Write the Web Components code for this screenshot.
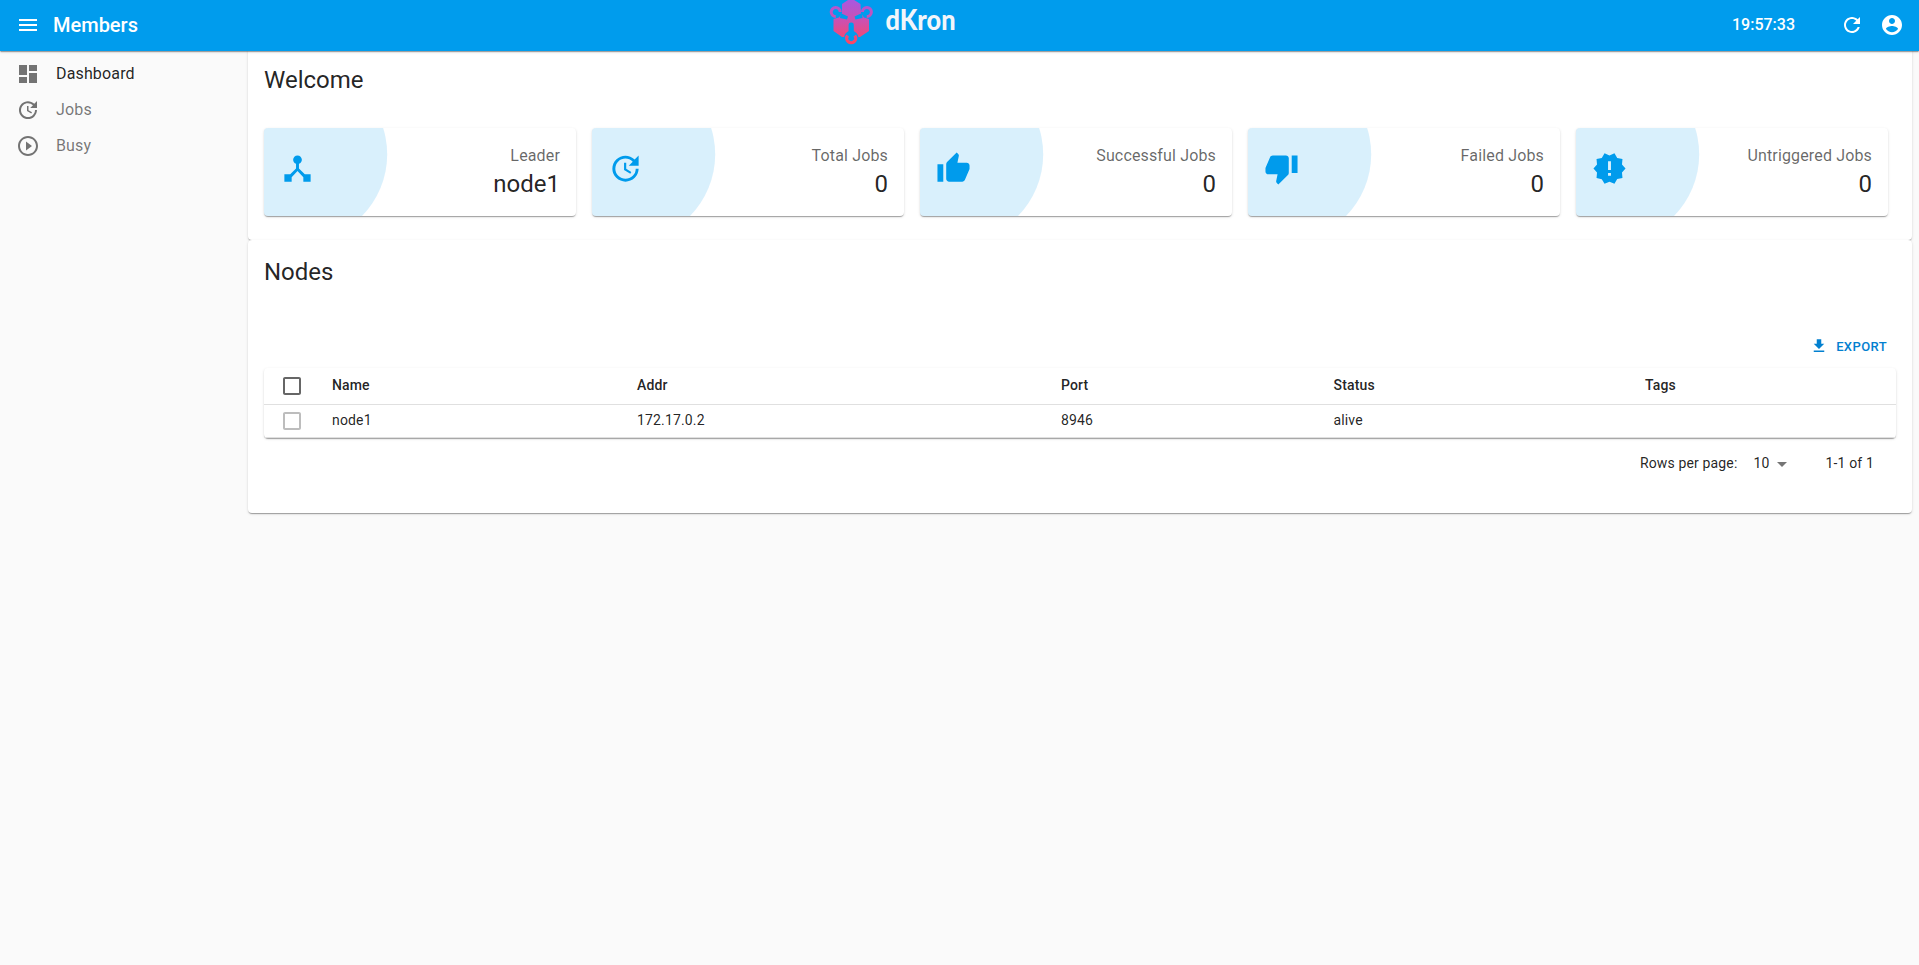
<!DOCTYPE html>
<html lang="en">
<head>
<meta charset="utf-8">
<title>Dkron</title>
<style>
    body {
        margin: 0;
        background: #fafafa;
        color: rgba(0, 0, 0, .87);
        font-family: Roboto, "Liberation Sans", sans-serif;
        --primary: #009ced;
        --shadow: 0 2px 1px -1px rgba(0, 0, 0, .2), 0 1px 1px 0 rgba(0, 0, 0, .14), 0 1px 3px 0 rgba(0, 0, 0, .12);
    }
</style>
</head>
<body>
<dk-layout>
    <dk-app-bar slot="bar" heading="Members" time="19:57:33"></dk-app-bar>
    <dk-menu-item slot="menu" icon="dashboard" active>Dashboard</dk-menu-item>
    <dk-menu-item slot="menu" icon="update">Jobs</dk-menu-item>
    <dk-menu-item slot="menu" icon="play">Busy</dk-menu-item>
    <dk-card heading="Welcome">
        <dk-stats>
            <dk-stat icon="hub" label="Leader">node1</dk-stat>
            <dk-stat icon="update" label="Total Jobs">0</dk-stat>
            <dk-stat icon="thumbUp" label="Successful Jobs">0</dk-stat>
            <dk-stat icon="thumbDown" label="Failed Jobs">0</dk-stat>
            <dk-stat icon="newReleases" label="Untriggered Jobs">0</dk-stat>
        </dk-stats>
    </dk-card>
    <dk-card heading="Nodes">
        <dk-export>Export</dk-export>
        <dk-datagrid></dk-datagrid>
        <dk-pagination per-page="10">1-1 of 1</dk-pagination>
    </dk-card>
</dk-layout>

<script>
const ICONS = {
    menu: 'M3 18h18v-2H3v2zm0-5h18v-2H3v2zm0-7v2h18V6H3z',
    dashboard: 'M3 13h8V3H3v10zm0 8h8v-6H3v6zm10 0h8V11h-8v10zm0-18v6h8V3h-8z',
    update: 'M21 10.12h-6.78l2.74-2.82c-2.73-2.7-7.15-2.8-9.88-.1-2.73 2.71-2.73 7.08 0 9.79s7.15 2.71 9.88 0C18.32 15.65 19 14.08 19 12.1h2c0 1.98-.88 4.55-2.64 6.29-3.51 3.48-9.21 3.48-12.72 0-3.5-3.47-3.53-9.11-.02-12.58s9.14-3.47 12.65 0L21 3v7.12zM12.5 8v4.25l3.5 2.08-.72 1.21L11 13V8h1.5z',
    play: 'M10 16.5l6-4.5-6-4.5v9zM12 2C6.48 2 2 6.48 2 12s4.48 10 10 10 10-4.48 10-10S17.52 2 12 2zm0 18c-4.41 0-8-3.59-8-8s3.59-8 8-8 8 3.59 8 8-3.59 8-8 8z',
    hub: 'M17 16l-4-4V8.82C14.16 8.4 15 7.3 15 6c0-1.66-1.34-3-3-3S9 4.34 9 6c0 1.3.84 2.4 2 2.82V12l-4 4H3v5h5v-3.05l4-4.2 4 4.2V21h5v-5h-4z',
    thumbUp: 'M1 21h4V9H1v12zm22-11c0-1.1-.9-2-2-2h-6.31l.95-4.57.03-.32c0-.41-.17-.79-.44-1.06L14.17 1 7.59 7.59C7.22 7.95 7 8.45 7 9v10c0 1.1.9 2 2 2h9c.83 0 1.54-.5 1.84-1.22l3.02-7.05c.09-.23.14-.47.14-.73v-2z',
    thumbDown: 'M15 3H6c-.83 0-1.54.5-1.84 1.22l-3.02 7.05c-.09.23-.14.47-.14.73v2c0 1.1.9 2 2 2h6.31l-.95 4.57-.03.32c0 .41.17.79.44 1.06L9.83 23l6.59-6.59c.36-.36.58-.86.58-1.41V5c0-1.1-.9-2-2-2zm4 0v12h4V3h-4z',
    newReleases: 'M23 12l-2.44-2.78.34-3.68-3.61-.82-1.89-3.18L12 3 8.6 1.54 6.71 4.72l-3.61.81.34 3.68L1 12l2.44 2.78-.34 3.69 3.61.82 1.89 3.18L12 21l3.4 1.46 1.89-3.18 3.61-.82-.34-3.68L23 12zm-10 5h-2v-2h2v2zm0-4h-2V7h2v6z',
    refresh: 'M17.65 6.35C16.2 4.9 14.21 4 12 4c-4.42 0-7.99 3.58-7.99 8s3.57 8 7.99 8c3.73 0 6.84-2.55 7.73-6h-2.08c-.82 2.33-3.04 4-5.65 4-3.31 0-6-2.69-6-6s2.69-6 6-6c1.66 0 3.14.69 4.22 1.78L13 11h7V4l-2.35 2.35z',
    account: 'M12 2C6.48 2 2 6.48 2 12s4.48 10 10 10 10-4.48 10-10S17.52 2 12 2zm0 3c1.66 0 3 1.34 3 3s-1.34 3-3 3-3-1.34-3-3 1.34-3 3-3zm0 14.2c-2.5 0-4.71-1.28-6-3.22.03-1.99 4-3.08 6-3.08 1.99 0 5.97 1.09 6 3.08-1.29 1.94-3.5 3.22-6 3.22z',
    download: 'M19 9h-4V3H9v6H5l7 7 7-7zM5 18v2h14v-2H5z',
    checkbox: 'M19 5v14H5V5h14m0-2H5c-1.1 0-2 .9-2 2v14c0 1.1.9 2 2 2h14c1.1 0 2-.9 2-2V5c0-1.1-.9-2-2-2z',
    dropDown: 'M7 10l5 5 5-5z'
};

class BaseElement extends HTMLElement {
    constructor() {
        super();
        this._shadowRoot = this.attachShadow({ mode: 'open' });
    }
    connectedCallback() {
        this._shadowRoot.innerHTML = this.template;
    }
}

class Icon extends BaseElement {
    get template() {
        return `
            <style>
                :host {
                    display: block;
                    flex: none;
                    width: var(--icon-size, 24px);
                    height: var(--icon-size, 24px);
                }
                svg {
                    display: block;
                    width: 100%;
                    height: 100%;
                    fill: currentColor;
                }
            </style>
            <svg viewBox="0 0 24 24"><path d="${ICONS[this.getAttribute('name')]}"/></svg>
        `;
    }
}

class Layout extends BaseElement {
    get template() {
        return `
            <style>
                :host {
                    display: flex;
                    flex-direction: column;
                    min-height: 100vh;
                }
                .bar {
                    height: 48px;
                    position: relative;
                    z-index: 1;
                }
                .body {
                    display: flex;
                    flex: 1;
                }
                nav {
                    width: 240px;
                    padding-top: 8px;
                    margin-right: 8px;
                }
                main {
                    flex: 1;
                    margin-right: 7px;
                }
            </style>
            <div class="bar"><slot name="bar"></slot></div>
            <div class="body">
                <nav><slot name="menu"></slot></nav>
                <main><slot></slot></main>
            </div>
        `;
    }
}

class Logo extends BaseElement {
    get template() {
        return `
            <style>
                :host {
                    display: block;
                }
                svg {
                    display: block;
                    overflow: visible;
                }
                text {
                    font: 900 28px Lato, sans-serif;
                    fill: #f1f5fa;
                }
                .cut {
                    fill: var(--primary);
                }
            </style>
            <svg width="130" height="51" viewBox="0 0 130 51">
                <defs>
                    <linearGradient id="bull" gradientUnits="userSpaceOnUse" x1="0" y1="0" x2="0" y2="44">
                        <stop offset="0" stop-color="#a858e0"/>
                        <stop offset=".5" stop-color="#cf50ac"/>
                        <stop offset="1" stop-color="#ff4560"/>
                    </linearGradient>
                </defs>
                <path fill="url(#bull)" d="M22-2 31.500 4 32 13 35 17.500 40 19V31L31 37H13L4.500 31V19L10 17.500 13 13V4z"/>
                <path class="cut" d="M11.500 13 19 16.500 18 19.500 11 18zM33 13 25.500 16.500 26.500 19.500 33.500 18z"/>
                <circle class="cut" cx="22.200" cy="38.200" r="7.400"/>
                <rect class="cut" x="19.600" y="22.500" width="5.200" height="14" rx="2.400"/>
                <g fill="none" stroke="url(#bull)" stroke-width="3">
                    <path d="M11.200 12A4.500 4.500 0 1 0 6.800 16.500"/>
                    <path d="M33.400 12A4.500 4.500 0 1 1 37.800 16.500"/>
                    <path stroke-width="3.200" d="M18.600 35.500a4.500 4.500 0 1 0 7.200 0"/>
                </g>
                <text x="56.500" y="29.500" textLength="70" lengthAdjust="spacingAndGlyphs">dKron</text>
            </svg>
        `;
    }
}

class AppBar extends BaseElement {
    get template() {
        return `
            <style>
                :host {
                    display: grid;
                    grid-template-columns: 829px 130px 1fr;
                    align-items: start;
                    height: 51px;
                    background: var(--primary);
                    color: #fff;
                    box-shadow: var(--shadow);
                }
                .side {
                    display: flex;
                    align-items: center;
                    height: 50px;
                }
                .left {
                    padding-left: 16px;
                }
                .right {
                    justify-content: flex-end;
                    padding-right: 15px;
                }
                h1 {
                    margin: 0 0 0 13px;
                    font-size: 20px;
                    font-weight: 500;
                    line-height: 32px;
                }
                time {
                    margin-right: 45px;
                    font-size: 16px;
                    font-weight: 500;
                    line-height: 24px;
                }
                dk-icon + dk-icon {
                    margin-left: 16px;
                }
            </style>
            <div class="side left">
                <dk-icon name="menu"></dk-icon>
                <h1>${this.getAttribute('heading')}</h1>
            </div>
            <dk-logo></dk-logo>
            <div class="side right">
                <time>${this.getAttribute('time')}</time>
                <dk-icon name="refresh"></dk-icon>
                <dk-icon name="account"></dk-icon>
            </div>
        `;
    }
}

class MenuItem extends BaseElement {
    get template() {
        return `
            <style>
                :host {
                    display: flex;
                    align-items: center;
                    height: 36px;
                    padding-left: 16px;
                    color: rgba(0, 0, 0, .54);
                    font-size: 16px;
                    line-height: 24px;
                    letter-spacing: .15px;
                }
                :host([active]) span {
                    color: rgba(0, 0, 0, .87);
                }
                dk-icon {
                    margin-right: 16px;
                }
            </style>
            <dk-icon name="${this.getAttribute('icon')}"></dk-icon>
            <span><slot></slot></span>
        `;
    }
}

class Card extends BaseElement {
    get template() {
        return `
            <style>
                :host {
                    display: block;
                    padding: 16px 16px 24px;
                    border-radius: 4px;
                    background: #fff;
                    box-shadow: var(--shadow);
                }
                h2 {
                    margin: 0 0 32px;
                    font-size: 24px;
                    font-weight: 400;
                    line-height: 32px;
                }
            </style>
            <h2>${this.getAttribute('heading')}</h2>
            <slot></slot>
        `;
    }
}

class Stats extends BaseElement {
    get template() {
        return `
            <style>
                :host {
                    display: grid;
                    grid-template-columns: repeat(5, 1fr);
                    gap: 16px;
                    margin-right: 8px;
                }
            </style>
            <slot></slot>
        `;
    }
}

class Stat extends BaseElement {
    get template() {
        return `
            <style>
                :host {
                    display: flex;
                    justify-content: space-between;
                    align-items: center;
                    position: relative;
                    overflow: hidden;
                    height: 56px;
                    padding: 16px;
                    border-radius: 4px;
                    background: #fff;
                    box-shadow: var(--shadow);
                }
                :host::before {
                    content: '';
                    position: absolute;
                    top: 50%;
                    left: 0;
                    height: 200%;
                    aspect-ratio: 1;
                    transform: translate(-30%, -60%);
                    border-radius: 50%;
                    background: var(--primary);
                    opacity: .15;
                }
                dk-icon {
                    --icon-size: 35px;
                    margin-bottom: 7px;
                    color: var(--primary);
                }
                .data {
                    text-align: right;
                }
                .label {
                    color: rgba(0, 0, 0, .6);
                    font-size: 16px;
                    line-height: 24px;
                    letter-spacing: .15px;
                }
                .value {
                    font-size: 24px;
                    line-height: 32px;
                }
            </style>
            <dk-icon name="${this.getAttribute('icon')}"></dk-icon>
            <div class="data">
                <div class="label">${this.getAttribute('label')}</div>
                <div class="value"><slot></slot></div>
            </div>
        `;
    }
}

class Export extends BaseElement {
    get template() {
        return `
            <style>
                :host {
                    display: flex;
                    justify-content: flex-end;
                    align-items: center;
                    height: 36px;
                    padding: 8px 9px 12px 0;
                    color: #0280d0;
                    font-size: 13px;
                    font-weight: 500;
                    letter-spacing: .4px;
                    text-transform: uppercase;
                }
                dk-icon {
                    --icon-size: 18px;
                    margin-right: 8px;
                }
            </style>
            <dk-icon name="download"></dk-icon>
            <slot></slot>
        `;
    }
}

class Datagrid extends BaseElement {
    get columns() {
        return ['Name', 'Addr', 'Port', 'Status', 'Tags'];
    }
    get rows() {
        return [['node1', '172.17.0.2', '8946', 'alive', '']];
    }
    get template() {
        return `
            <style>
                :host {
                    display: block;
                    margin-top: -8px;
                    border-radius: 4px;
                    background: #fff;
                    box-shadow: var(--shadow);
                    font-size: 14px;
                    letter-spacing: .15px;
                }
                .row {
                    display: grid;
                    grid-template-columns: 52px 305px 424px 272.500px 311.500px 1fr;
                    align-items: center;
                    height: 32px;
                    border-bottom: 1px solid #e0e0e0;
                    line-height: 20px;
                }
                .head {
                    height: 36px;
                    font-weight: 500;
                }
                .row span {
                    padding: 0 16px 2px;
                }
                dk-icon {
                    margin-left: 16px;
                    color: rgba(0, 0, 0, .26);
                }
                .head dk-icon {
                    color: rgba(0, 0, 0, .6);
                }
            </style>
            <div class="row head">
                <dk-icon name="checkbox"></dk-icon>
                ${this.columns.map(name => `<span>${name}</span>`).join('')}
            </div>
            ${this.rows.map(row => `
                <div class="row">
                    <dk-icon name="checkbox"></dk-icon>
                    ${row.map(value => `<span>${value}</span>`).join('')}
                </div>
            `).join('')}
        `;
    }
}

class Pagination extends BaseElement {
    get template() {
        return `
            <style>
                :host {
                    display: flex;
                    justify-content: flex-end;
                    align-items: center;
                    height: 51px;
                    padding-right: 22px;
                    font-size: 14px;
                    line-height: 20px;
                    letter-spacing: .15px;
                }
                span {
                    padding-bottom: 1px;
                }
                .size {
                    margin-left: 16px;
                }
                dk-icon {
                    margin: 1px 32px 0 0;
                    color: rgba(0, 0, 0, .54);
                }
            </style>
            <span>Rows per page:</span>
            <span class="size">${this.getAttribute('per-page')}</span>
            <dk-icon name="dropDown"></dk-icon>
            <span><slot></slot></span>
        `;
    }
}

window.customElements.define('dk-icon', Icon);
window.customElements.define('dk-layout', Layout);
window.customElements.define('dk-logo', Logo);
window.customElements.define('dk-app-bar', AppBar);
window.customElements.define('dk-menu-item', MenuItem);
window.customElements.define('dk-card', Card);
window.customElements.define('dk-stats', Stats);
window.customElements.define('dk-stat', Stat);
window.customElements.define('dk-export', Export);
window.customElements.define('dk-datagrid', Datagrid);
window.customElements.define('dk-pagination', Pagination);
</script>
</body>
</html>
